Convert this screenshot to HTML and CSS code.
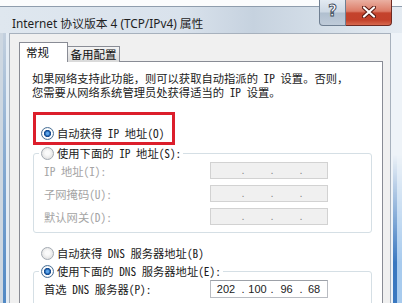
FILE: index.html
```html
<!DOCTYPE html>
<html lang="zh-CN">
<head>
<meta charset="utf-8">
<title>Internet 协议版本 4 (TCP/IPv4) 属性</title>
<link rel="stylesheet" href="styles.css">
</head>
<body>
<div class="window">
  <div class="titlebar">
    <span class="title">Internet 协议版本 4 (TCP/IPv4) 属性</span>
    <div class="caption">
      <span class="cbtn help">?</span>
      <span class="cbtn close"><svg width="14" height="12" viewBox="0 0 14 12"><path d="M2 1.5 L12 10.5 M12 1.5 L2 10.5" stroke="#5a1a12" stroke-width="4.2" stroke-linecap="round"/><path d="M2 1.5 L12 10.5 M12 1.5 L2 10.5" stroke="#fff" stroke-width="2.2" stroke-linecap="round"/></svg></span>
    </div>
  </div>
  <div class="frame">
    <div class="client">
      <div class="tabs">
        <span class="tab active">常规</span>
        <span class="tab">备用配置</span>
      </div>
      <div class="panel">
        <div class="intro">
          <p>如果网络支持此功能，则可以获取自动指派的 IP 设置。否则，</p>
          <p>您需要从网络系统管理员处获得适当的 IP 设置。</p>
        </div>
        <div class="mark">
          <label class="radio"><span class="dot on"></span>自动获得 IP 地址(O)</label>
        </div>
        <fieldset class="group">
          <legend><label class="radio"><span class="dot"></span>使用下面的 IP 地址(S):</label></legend>
          <div class="row off"><span class="lbl">IP 地址(I):</span><span class="ip"><i></i><b>.</b><i></i><b>.</b><i></i><b>.</b><i></i></span></div>
          <div class="row off"><span class="lbl">子网掩码(U):</span><span class="ip"><i></i><b>.</b><i></i><b>.</b><i></i><b>.</b><i></i></span></div>
          <div class="row off"><span class="lbl">默认网关(D):</span><span class="ip"><i></i><b>.</b><i></i><b>.</b><i></i><b>.</b><i></i></span></div>
        </fieldset>
        <label class="radio solo"><span class="dot"></span>自动获得 DNS 服务器地址(B)</label>
        <fieldset class="group dns">
          <legend><label class="radio"><span class="dot on"></span>使用下面的 DNS 服务器地址(E):</label></legend>
          <div class="row"><span class="lbl">首选 DNS 服务器(P):</span><span class="ip"><i>202</i><b>.</b><i>100</i><b>.</b><i>96</i><b>.</b><i>68</i></span></div>
        </fieldset>
      </div>
    </div>
  </div>
</div>
</body>
</html>
```

FILE: styles.css
```css
* { box-sizing: border-box; }
html, body { margin: 0; padding: 0; }
body {
  width: 402px;
  height: 303px;
  overflow: hidden;
  background: #fff;
  font-family: "Noto Sans Mono CJK SC", "Noto Sans CJK SC", sans-serif;
  font-size: 11.3px;
  color: #1b1b1b;
}
.window {
  width: 402px;
  height: 303px;
  overflow: hidden;
  display: flex;
  flex-direction: column;
  background: #eef3f8;
}
.titlebar {
  height: 33px;
  flex: none;
  display: flex;
  align-items: flex-start;
  padding-left: 12px;
  background:
    linear-gradient(#fbfcfd 0 6px, #8f9dad 6px 7px, transparent 7px),
    linear-gradient(90deg, #dfe7ef 0%, #d9e2ec 45%, #c6d2df 63%, #d4dee8 80%, #e4ebf2 100%);
}
.title {
  font-family: "Noto Sans", "Noto Sans CJK SC", sans-serif;
  font-size: 11.8px;
  line-height: 16px;
  margin-top: 15px;
  color: #1e1e1e;
  white-space: nowrap;
}
.caption {
  margin-left: auto;
  margin-right: 10px;
  display: flex;
  height: 26px;
}
.cbtn {
  height: 26px;
  display: flex;
  align-items: center;
  justify-content: center;
}
.help {
  width: 27px;
  border: 1px solid #6f7f92;
  border-top: none;
  border-radius: 0 0 0 4px;
  background: linear-gradient(#e3eaf2, #ccd7e3 48%, #b0bfcf 52%, #bfcbd9);
  font-family: "DejaVu Sans", sans-serif;
  font-weight: bold;
  font-size: 15px;
  color: #fff;
  -webkit-text-stroke: 0.9px #3c4a5a;
  padding-bottom: 3px;
}
.close {
  width: 46px;
  border: 1px solid #6e2a22;
  border-top: none;
  border-left: none;
  border-radius: 0 0 4px 0;
  background: linear-gradient(#eab0a2, #dc7b66 45%, #c4432c 52%, #c3412a 80%, #d7694f);
  padding-bottom: 1px;
}
.frame {
  flex: 1;
  min-height: 0;
  display: flex;
  padding: 0 11px 0 9px;
  position: relative;
  background: linear-gradient(90deg, #cdd7e1 0 3px, transparent 3px 6px, #e4ecf4 6px 9px, transparent 9px);
}
.frame::before {
  content: "";
  position: absolute;
  left: 3px;
  top: 0;
  bottom: 0;
  width: 3px;
  background: linear-gradient(#c3d0de 0%, #8eafd3 40%, #5088c4 100%);
}
.frame::after {
  content: "";
  position: absolute;
  left: 393px;
  right: 0;
  top: 0;
  bottom: 0;
  background: linear-gradient(90deg, #3a78c0 0 4px, #a8cbee 4px);
  -webkit-mask-image: linear-gradient(transparent 45%, #000 85%);
  mask-image: linear-gradient(transparent 45%, #000 85%);
}
.client {
  flex: 1;
  min-height: 0;
  background: #f0f0f0;
  border: 1px solid #a7b1bd;
  border-bottom: none;
  padding: 8px 7px 0 9px;
  display: flex;
  flex-direction: column;
}
.tabs {
  display: flex;
  align-items: flex-end;
  height: 20px;
  flex: none;
  margin-bottom: -1px;
  position: relative;
  z-index: 1;
}
.tab {
  height: 16px;
  width: 53px;
  margin-left: -1px;
  border: 1px solid #898c95;
  border-bottom: none;
  background: linear-gradient(#f4f4f4, #e6e6e6 50%, #d9d9d9);
  font-size: 11.5px;
  line-height: 14px;
  text-align: center;
  color: #111;
}
.tab.active {
  height: 20px;
  width: 49px;
  margin-left: 0;
  background: #fff;
  text-align: left;
  padding-left: 6px;
  line-height: 18px;
  position: relative;
  z-index: 2;
}
.panel {
  flex: 1;
  min-height: 0;
  overflow: hidden;
  background: #fff;
  border: 1px solid #898c95;
  border-bottom: none;
  padding-left: 12px;
}
.intro {
  margin-top: 9px;
  white-space: nowrap;
}
.intro p {
  margin: 0;
  height: 14px;
  line-height: 14px;
}
.mark {
  margin: 13px 0 0 1px;
  width: 142px;
  height: 33px;
  border: 3px solid #dc1e2b;
  padding: 11px 0 0 5px;
}
.radio {
  display: flex;
  align-items: center;
  height: 14px;
  line-height: 14px;
  white-space: nowrap;
}
.dot {
  width: 13px;
  height: 13px;
  flex: none;
  margin-right: 3px;
  border-radius: 50%;
  border: 1px solid #a3aab2;
  background: radial-gradient(circle at 50% 45%, #fafafa 0 25%, #e9e9e9 60%, #d6d6d6 100%);
}
.dot.on {
  border-color: #4a7197;
  background: radial-gradient(circle, #5fa6ea 0 1.2px, #2468b4 2.2px, #16488a 3.3px, #fff 3.9px 4.4px, #dfe3e8 6px);
}
.group {
  margin: 1px 0 0 1px;
  width: 339px;
  border: 1px solid #d5dfe5;
  border-radius: 3px;
  padding: 0 0 7px 10px;
  min-width: 0;
}
.group legend {
  padding: 0 2px;
  margin-left: -5px;
}
.row {
  display: flex;
  align-items: center;
  height: 17px;
  margin-top: 6px;
  white-space: nowrap;
}
.group legend + .row { margin-top: 2px; }
.lbl { width: 166px; flex: none; }
.row.off .lbl { color: #a4a4a4; }
.ip {
  width: 118px;
  height: 17px;
  flex: none;
  display: grid;
  grid-template-columns: 30px 4px 25px 4px 25px 4px 22px;
  border: 1px solid #d2d2d2;
  background: #f0f0f0;
  font-family: "Liberation Sans", sans-serif;
  font-size: 11px;
  line-height: 15px;
}
.ip i { font-style: normal; text-align: center; }
.ip b { font-weight: normal; text-align: center; color: #8a8a8a; }
.solo { margin: 13px 0 0 9px; }
.dns { margin-top: 4px; padding-bottom: 10px; }
.dns .row { height: 18px; }
.dns .lbl { color: #1b1b1b; }
.dns .ip {
  height: 18px;
  background: #fff;
  border-color: #b9bcc2;
  border-top-color: #9da1a8;
  color: #222;
  line-height: 16px;
}
.dns .ip b { color: #222; }
```
